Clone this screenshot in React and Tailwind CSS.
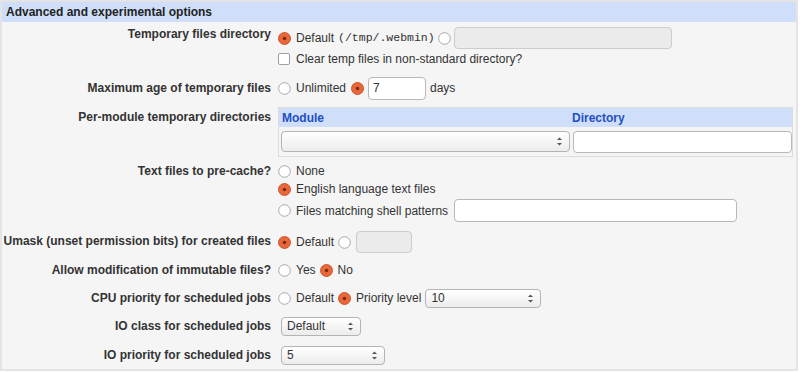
import React from "react";

function Radio({ checked }) {
  return (
    <svg width="13" height="13" viewBox="0 0 13 13" className="shrink-0">
      {checked ? (
        <>
          <circle cx="6.5" cy="6.5" r="6" fill="#e8683c" stroke="#cf5529" strokeWidth="1" />
          <circle cx="6.5" cy="6.5" r="1.8" fill="#7d2a0e" />
        </>
      ) : (
        <>
          <circle cx="6.5" cy="6.5" r="5.8" fill="#ffffff" stroke="#a9a9a9" strokeWidth="1" />
        </>
      )}
    </svg>
  );
}

function Arrows() {
  return (
    <svg width="7" height="11" viewBox="0 0 7 11" className="shrink-0">
      <path d="M1 4 L3.5 1.5 L6 4 Z" fill="#555" />
      <path d="M1 7 L3.5 9.5 L6 7 Z" fill="#555" />
    </svg>
  );
}

function Select({ value, className }) {
  return (
    <div
      className={
        "flex items-center justify-between rounded-[4px] border border-[#b4b4b4] bg-gradient-to-b from-white to-[#ececec] pl-[5px] pr-[6px] text-[12px] text-[#333] " +
        className
      }
    >
      <span>{value}</span>
      <Arrows />
    </div>
  );
}

function Label({ children, className }) {
  return (
    <div className={"w-[269px] shrink-0 text-right font-bold text-[12px] leading-[16px] text-[#333] " + (className || "")}>
      {children}
    </div>
  );
}

export default function App() {
  return (
    <div
      className="w-[800px] h-[373px] bg-white"
      style={{ fontFamily: '"Liberation Sans", Arial, sans-serif' }}
    >
      <div className="w-[798px] h-[371px] border-2 border-[#e4e4e4] bg-[#f5f5f5] flex flex-col">
        <div className="h-[20px] bg-[#cfdffa] flex items-center pl-[4px] font-bold text-[12px] text-[#222]">
          Advanced and experimental options
        </div>

        {/* Row 1 */}
        <div className="mt-[4px] h-[42px] flex text-[12px] text-[#333]">
          <Label className="pt-0">Temporary files directory</Label>
          <div className="ml-[7px] flex flex-col">
            <div className="h-[24px] flex items-center">
              <Radio checked />
              <span className="ml-[5px]">Default</span>
              <span className="ml-[4px] text-[11.5px]" style={{ fontFamily: '"Liberation Mono", "Courier New", monospace' }}>
                (/tmp/.webmin)
              </span>
              <span className="ml-[3px]"><Radio /></span>
              <div className="ml-[3px] w-[218px] h-[22px] rounded-[4px] border border-[#cccccc] bg-[#ebebeb]" />
            </div>
            <div className="h-[18px] flex items-center">
              <div className="w-[12px] h-[12px] rounded-[2px] border border-[#a0a0a0] bg-white shrink-0" />
              <span className="ml-[6px]">Clear temp files in non-standard directory?</span>
            </div>
          </div>
        </div>

        {/* Row 2 */}
        <div className="mt-[8px] h-[24px] flex items-center text-[12px] text-[#333]">
          <Label>Maximum age of temporary files</Label>
          <div className="ml-[7px] flex items-center">
            <Radio />
            <span className="ml-[5px]">Unlimited</span>
            <span className="ml-[5px]"><Radio checked /></span>
            <div className="ml-[4px] w-[58px] h-[23px] rounded-[4px] border border-[#b8b8b8] bg-white flex items-center pl-[4px]">7</div>
            <span className="ml-[4px]">days</span>
          </div>
        </div>

        {/* Row 3 */}
        <div className="mt-[7px] h-[50px] flex text-[12px] text-[#333]">
          <Label className="pt-[2px]">Per-module temporary directories</Label>
          <div className="ml-[7px] w-[515px] border border-[#dddddd] flex flex-col">
            <div className="h-[19px] bg-[#cfdffa] flex items-center font-bold text-[#1f4fc4]">
              <div className="w-[293px] pl-[3px]">Module</div>
              <div>Directory</div>
            </div>
            <div className="flex items-center h-[29px] pl-[2px]">
              <Select value="" className="w-[289px] h-[21px]" />
              <div className="ml-[3px] w-[219px] h-[22px] rounded-[4px] border border-[#b8b8b8] bg-white" />
            </div>
          </div>
        </div>

        {/* Row 4 */}
        <div className="mt-[5px] h-[62px] flex text-[12px] text-[#333]">
          <Label className="pt-[1px]">Text files to pre-cache?</Label>
          <div className="ml-[7px] flex flex-col">
            <div className="h-[18px] flex items-center">
              <Radio />
              <span className="ml-[5px]">None</span>
            </div>
            <div className="h-[18px] flex items-center">
              <Radio checked />
              <span className="ml-[5px]">English language text files</span>
            </div>
            <div className="h-[25px] flex items-center">
              <Radio />
              <span className="ml-[5px]">Files matching shell patterns</span>
              <div className="ml-[6px] w-[283px] h-[23px] rounded-[4px] border border-[#b8b8b8] bg-white" />
            </div>
          </div>
        </div>

        {/* Row 5 */}
        <div className="mt-[6px] h-[24px] flex items-center text-[12px] text-[#333]">
          <Label className="-mt-[3px]">Umask (unset permission bits) for created files</Label>
          <div className="ml-[7px] flex items-center">
            <Radio checked />
            <span className="ml-[5px]">Default</span>
            <span className="ml-[4px]"><Radio /></span>
            <div className="ml-[5px] w-[56px] h-[22px] rounded-[4px] border border-[#cccccc] bg-[#ebebeb]" />
          </div>
        </div>

        {/* Row 6 */}
        <div className="mt-[4px] h-[24px] flex items-center text-[12px] text-[#333]">
          <Label>Allow modification of immutable files?</Label>
          <div className="ml-[7px] flex items-center">
            <Radio />
            <span className="ml-[5px]">Yes</span>
            <span className="ml-[4px]"><Radio checked /></span>
            <span className="ml-[5px]">No</span>
          </div>
        </div>

        {/* Row 7 */}
        <div className="mt-[4px] h-[24px] flex items-center text-[12px] text-[#333]">
          <Label>CPU priority for scheduled jobs</Label>
          <div className="ml-[7px] flex items-center">
            <Radio />
            <span className="ml-[5px]">Default</span>
            <span className="ml-[4px]"><Radio checked /></span>
            <span className="ml-[5px]">Priority level</span>
            <Select value="10" className="ml-[4px] w-[116px] h-[19px]" />
          </div>
        </div>

        {/* Row 8 */}
        <div className="mt-[4px] h-[24px] flex items-center text-[12px] text-[#333]">
          <Label>IO class for scheduled jobs</Label>
          <div className="ml-[10px] flex items-center">
            <Select value="Default" className="w-[80px] h-[19px]" />
          </div>
        </div>

        {/* Row 9 */}
        <div className="mt-[5px] h-[24px] flex items-center text-[12px] text-[#333]">
          <Label>IO priority for scheduled jobs</Label>
          <div className="ml-[10px] flex items-center">
            <Select value="5" className="w-[104px] h-[19px]" />
          </div>
        </div>
      </div>
    </div>
  );
}
